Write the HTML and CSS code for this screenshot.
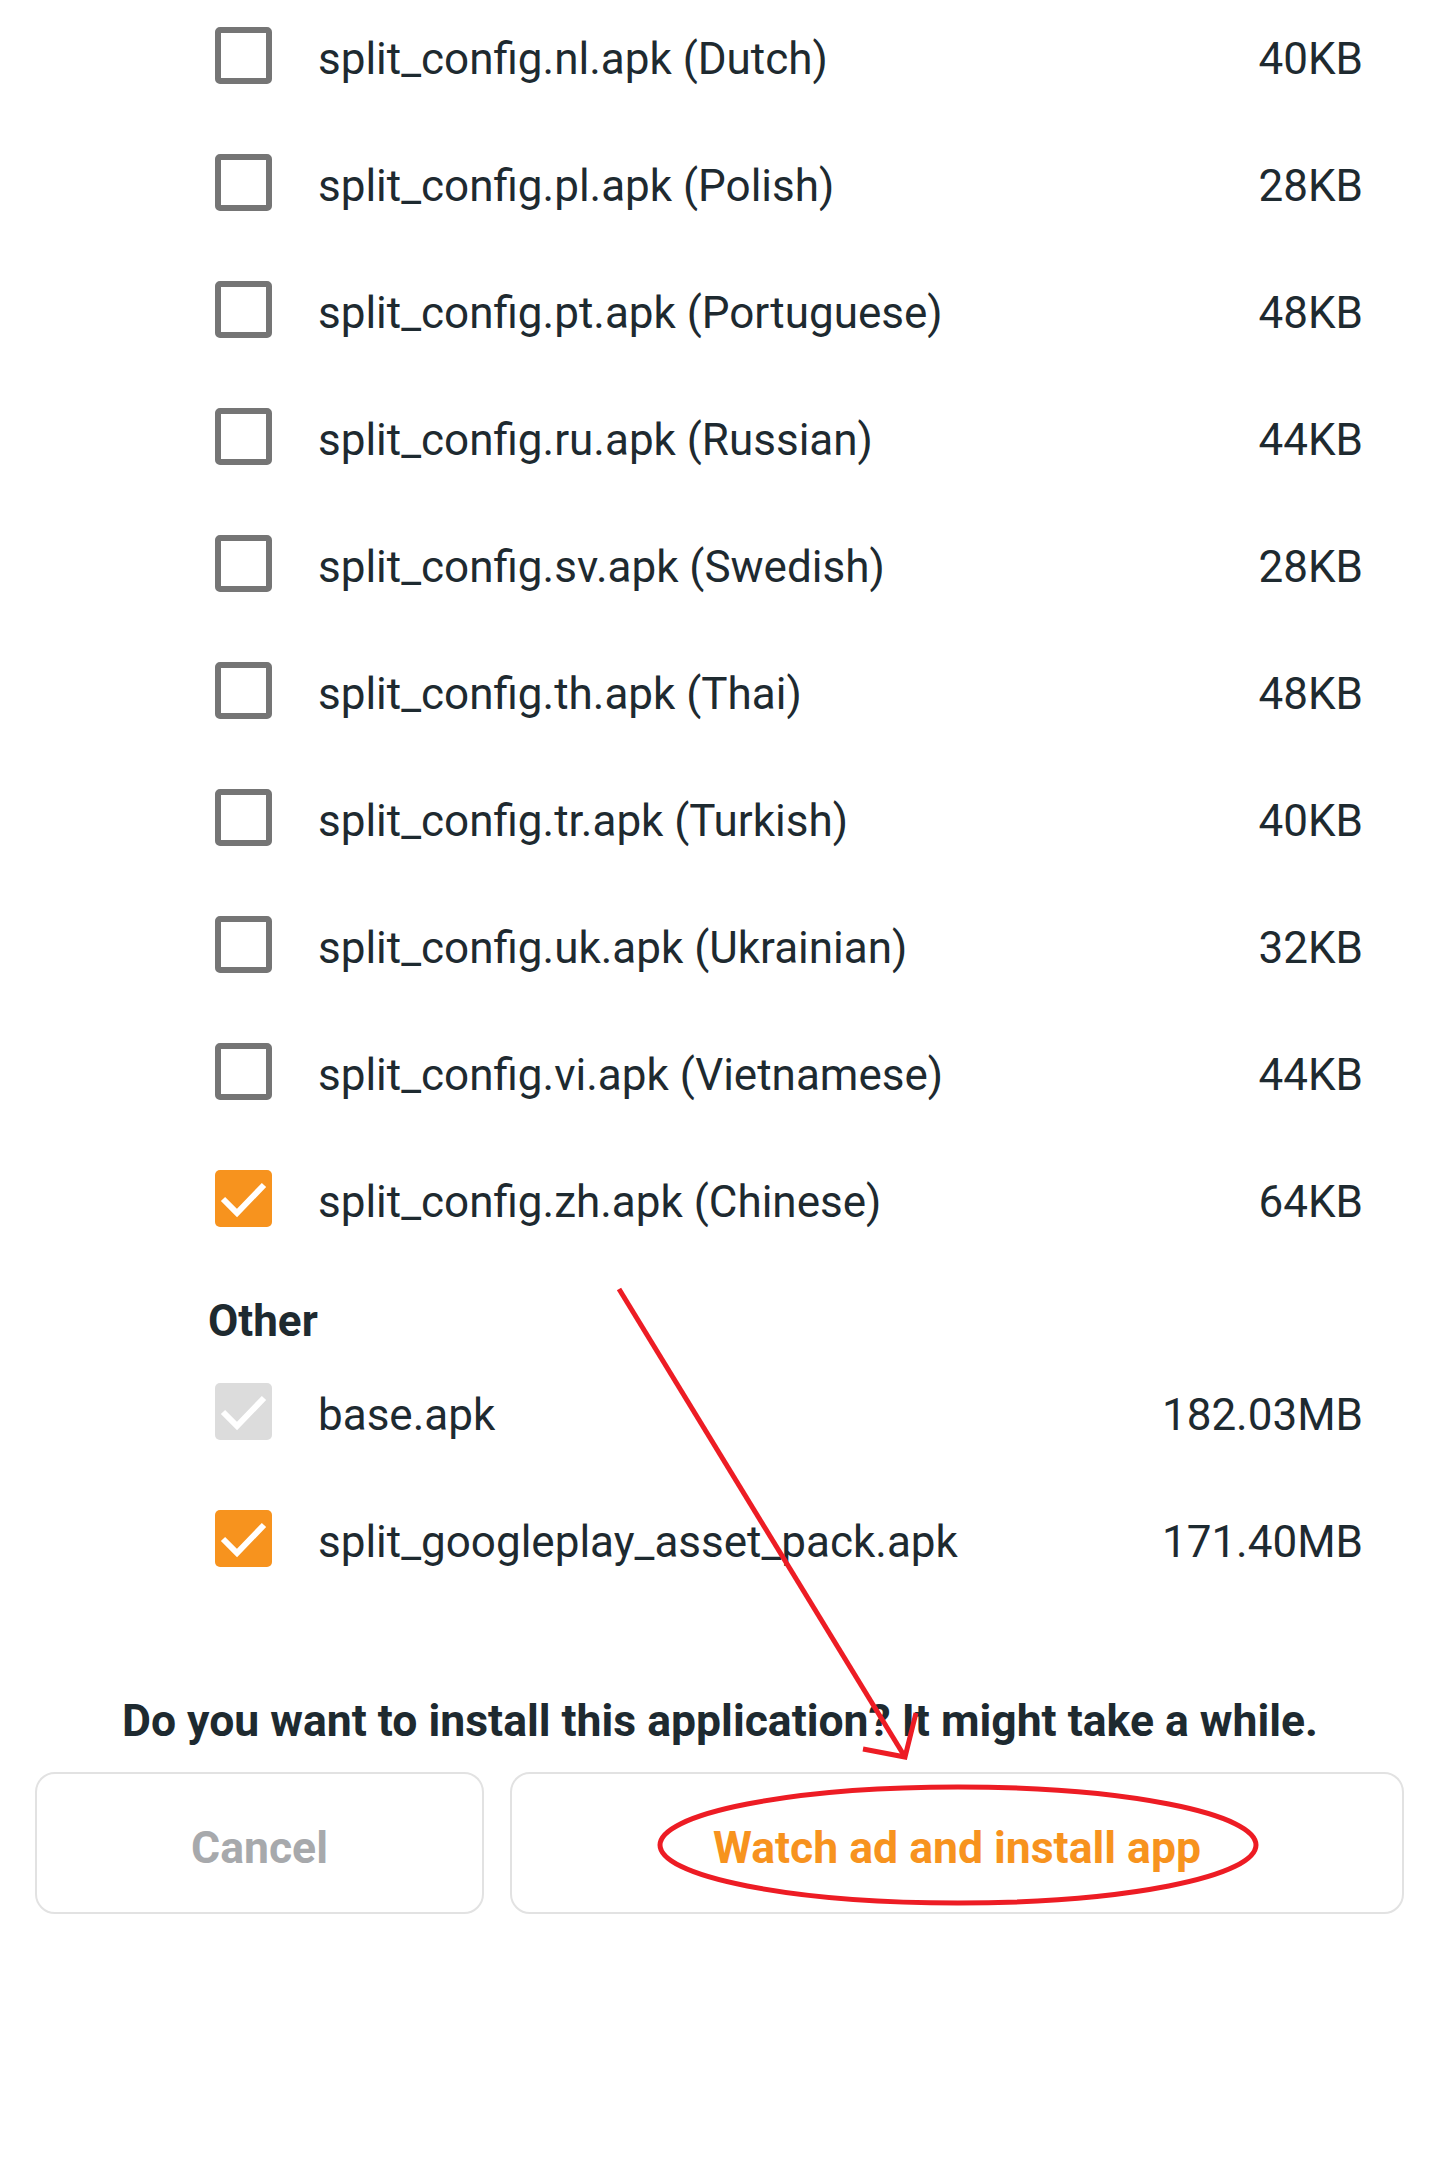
FILE: index.html
```html
<!DOCTYPE html>
<html lang="en">
<head>
    <meta charset="UTF-8">
    <meta name="viewport" content="width=device-width, initial-scale=1.0">
    <title>Install split APKs</title>
    <link rel="stylesheet" href="styles.css">
</head>
<body>
    <div class="sheet">
        <ul class="split-list">
            <li class="split-row">
                <span class="box"></span>
                <span class="split-name">split_config.nl.apk (Dutch)</span>
                <span class="split-size">40KB</span>
            </li>
            <li class="split-row">
                <span class="box"></span>
                <span class="split-name">split_config.pl.apk (Polish)</span>
                <span class="split-size">28KB</span>
            </li>
            <li class="split-row">
                <span class="box"></span>
                <span class="split-name">split_config.pt.apk (Portuguese)</span>
                <span class="split-size">48KB</span>
            </li>
            <li class="split-row">
                <span class="box"></span>
                <span class="split-name">split_config.ru.apk (Russian)</span>
                <span class="split-size">44KB</span>
            </li>
            <li class="split-row">
                <span class="box"></span>
                <span class="split-name">split_config.sv.apk (Swedish)</span>
                <span class="split-size">28KB</span>
            </li>
            <li class="split-row">
                <span class="box"></span>
                <span class="split-name">split_config.th.apk (Thai)</span>
                <span class="split-size">48KB</span>
            </li>
            <li class="split-row">
                <span class="box"></span>
                <span class="split-name">split_config.tr.apk (Turkish)</span>
                <span class="split-size">40KB</span>
            </li>
            <li class="split-row">
                <span class="box"></span>
                <span class="split-name">split_config.uk.apk (Ukrainian)</span>
                <span class="split-size">32KB</span>
            </li>
            <li class="split-row">
                <span class="box"></span>
                <span class="split-name">split_config.vi.apk (Vietnamese)</span>
                <span class="split-size">44KB</span>
            </li>
            <li class="split-row">
                <span class="box checked">
                    <svg viewBox="0 0 57 57"><polyline points="8,29 22,43 49,15"/></svg>
                </span>
                <span class="split-name">split_config.zh.apk (Chinese)</span>
                <span class="split-size">64KB</span>
            </li>
        </ul>

        <h2 class="group-title">Other</h2>

        <ul class="split-list">
            <li class="split-row">
                <span class="box checked disabled">
                    <svg viewBox="0 0 57 57"><polyline points="8,29 22,43 49,15"/></svg>
                </span>
                <span class="split-name">base.apk</span>
                <span class="split-size">182.03MB</span>
            </li>
            <li class="split-row">
                <span class="box checked">
                    <svg viewBox="0 0 57 57"><polyline points="8,29 22,43 49,15"/></svg>
                </span>
                <span class="split-name">split_googleplay_asset_pack.apk</span>
                <span class="split-size">171.40MB</span>
            </li>
        </ul>

        <p class="question">Do you want to install this application? It might take a while.</p>

        <div class="actions">
            <button class="btn btn-cancel">Cancel</button>
            <button class="btn btn-install">Watch ad and install app</button>
        </div>
    </div>

    <!-- red marker scribbled over the install button -->
    <svg class="markup" viewBox="0 0 1440 2164" width="1440" height="2164">
        <line x1="619" y1="1289" x2="905" y2="1757"/>
        <polyline points="863,1749 905,1757 916,1713"/>
        <ellipse cx="958" cy="1845" rx="298" ry="58"/>
    </svg>
</body>
</html>
```

FILE: styles.css
```css
* {
    margin: 0;
    padding: 0;
    box-sizing: border-box;
}

body {
    font-family: Roboto, "Noto Sans", sans-serif;
    background: #fff;
    color: #1e2a30;
    width: 1440px;
    height: 2164px;
    overflow: hidden;
    position: relative;
}

.split-list {
    list-style: none;
}

.sheet > .split-list:first-child {
    margin-top: -8px;
}

.split-row {
    height: 127px;
    display: flex;
    align-items: center;
    padding: 0 77px 0 215px;
    font-size: 44px;
}

.box {
    width: 57px;
    height: 57px;
    flex-shrink: 0;
    border: 6px solid #757575;
    border-radius: 5px;
    margin-right: 46px;
    position: relative;
}

.box.checked {
    border: none;
    background: #f7931e;
}

.box.disabled {
    background: #dcdcdc;
}

.box svg {
    width: 57px;
    height: 57px;
    display: block;
}

.box polyline {
    fill: none;
    stroke: #fff;
    stroke-width: 6;
}

.split-name {
    flex: 1;
    padding-top: 6px;
    white-space: nowrap;
}

.split-size {
    padding-top: 6px;
}

.group-title {
    font-size: 44px;
    font-weight: 700;
    line-height: 44px;
    padding: 37px 0 5px 208px;
}

.question {
    font-size: 44.5px;
    font-weight: 700;
    line-height: 52px;
    text-align: center;
    margin-top: 93px;
}

.actions {
    display: flex;
    gap: 26px;
    padding: 0 36px 0 35px;
    margin-top: 25px;
}

.btn {
    height: 142px;
    background: #fff;
    border: 2px solid #e2e2e2;
    border-radius: 20px;
    font-family: Roboto, "Noto Sans", sans-serif;
    font-size: 44.5px;
    font-weight: 700;
    padding-top: 10px;
    cursor: pointer;
}

.btn-cancel {
    flex: 1;
    color: #a7a9ac;
}

.btn-install {
    flex: 2;
    color: #f7931e;
}

.markup {
    position: absolute;
    left: 0;
    top: 0;
    pointer-events: none;
}

.markup line,
.markup polyline,
.markup ellipse {
    fill: none;
    stroke: #ed1c24;
    stroke-width: 5;
}
```
